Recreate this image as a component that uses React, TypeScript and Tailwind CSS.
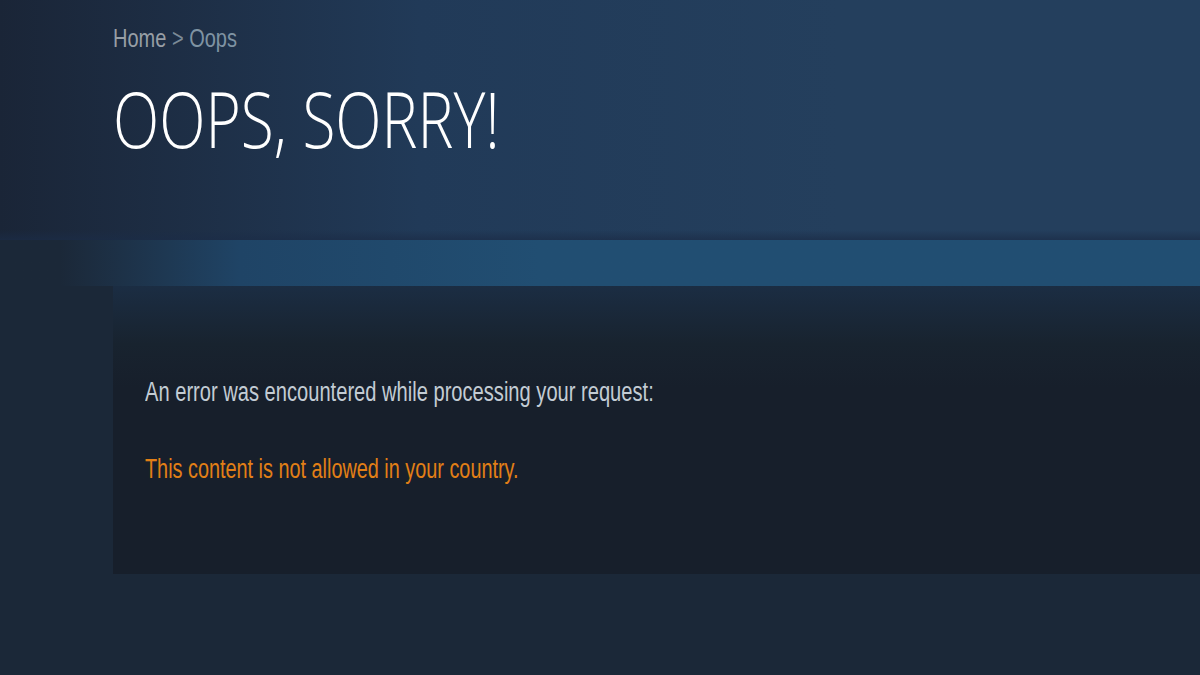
export default function App() {
  return (
    <div className="min-h-[675px] w-full overflow-hidden bg-[#1b2838] font-['Liberation_Sans',Arial,sans-serif]">
      {/* page header */}
      <header className="relative h-[240px] bg-gradient-to-r from-[#1a2537] via-[#213a58] via-[35%] to-[#243f5d] to-[70%] pl-[113px] pt-[26px]">
        <div className="pointer-events-none absolute inset-x-0 bottom-0 h-[10px] bg-gradient-to-b from-transparent to-[#1b2c47]/70" />
        <div className="inline-block origin-left scale-x-[0.8] whitespace-nowrap text-[25px] leading-none">
          <span className="text-[#979ea5]">Home</span>
          <span className="text-[#7b8a97]"> &gt; </span>
          <span className="text-[#7f93a3]">Oops</span>
        </div>
        <h1 className="mt-[26px] origin-left scale-x-[0.785] whitespace-nowrap font-['Open_Sans',sans-serif] text-[77px] font-light leading-none text-white">
          OOPS, SORRY!
        </h1>
      </header>

      {/* blue band */}
      <div className="h-[46px] bg-gradient-to-r from-[#1b2838] from-[5%] via-[#1f4466] via-[20%] to-[#214e72] to-[45%]" />

      {/* error box */}
      <div className="pl-[113px]">
        <div className="h-[288px] bg-gradient-to-b from-[#1b2d43] via-[#18232f] via-[20%] to-[#171f2b] to-[35%] pl-[32px] pt-[93px]">
          <p className="origin-left scale-x-[0.745] whitespace-nowrap text-[27px] leading-none text-[#c3ccd4]">
            An error was encountered while processing your request:
          </p>
          <p className="mt-[50px] origin-left scale-x-[0.735] whitespace-nowrap text-[27px] leading-none text-[#e27f16]">
            This content is not allowed in your country.
          </p>
        </div>
      </div>
    </div>
  );
}
